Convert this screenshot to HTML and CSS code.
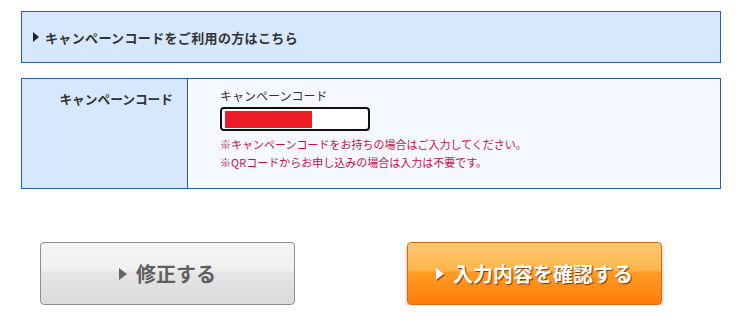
FILE: index.html
```html
<!DOCTYPE html>
<html lang="ja">
<head>
<meta charset="utf-8">
<link rel="stylesheet" href="styles.css">
</head>
<body>
<div class="page">
  <div class="campaign-head">
    <span class="tri"></span><span class="head-text">キャンペーンコードをご利用の方はこちら</span>
  </div>
  <div class="form-table">
    <div class="label-cell">キャンペーンコード</div>
    <div class="field-cell">
      <div class="field-label">キャンペーンコード</div>
      <div class="input-box"><span class="redact"></span></div>
      <p class="note">※キャンペーンコードをお持ちの場合はご入力してください。</p>
      <p class="note">※QRコードからお申し込みの場合は入力は不要です。</p>
    </div>
  </div>
  <div class="buttons">
    <button class="btn btn-back"><span class="btri"></span>修正する</button>
    <button class="btn btn-confirm"><span class="btri"></span>入力内容を確認する</button>
  </div>
</div>
</body>
</html>
```
FILE: styles.css
```css
* { box-sizing: border-box; }
body {
  margin: 0;
  background: #fff;
  font-family: "Noto Sans CJK JP", "Noto Sans", sans-serif;
  color: #222;
}
.page {
  padding: 11px 0 0 21px;
  width: 721px;
}
.campaign-head {
  height: 52px;
  border: 1px solid #2a5aa8;
  background: #d6e8fd;
  display: flex;
  align-items: center;
  padding-left: 11px;
  font-size: 13px;
  font-weight: bold;
  color: #333;
  letter-spacing: 0.35px;
}
.tri {
  width: 0; height: 0;
  border-top: 5px solid transparent;
  border-bottom: 5px solid transparent;
  border-left: 6px solid #222;
  margin-right: 6px;
}
.form-table {
  margin-top: 15px;
  height: 111px;
  border: 1px solid #2a5aa8;
  display: flex;
}
.label-cell {
  width: 166px;
  background: #d6e8fd;
  border-right: 1px solid #2a5aa8;
  text-align: right;
  padding: 10px 14px 0 0;
  font-size: 12.7px;
  font-weight: bold;
  color: #333;
}
.field-cell {
  flex: 1;
  background: #f5f9ff;
  padding: 9px 0 0 32px;
}
.field-label {
  font-size: 12px;
  color: #333;
  line-height: 16px;
}
.input-box {
  margin-top: 3px;
  width: 150px;
  height: 24px;
  border: 2px solid #111;
  border-radius: 4px;
  background: #fff;
  padding: 2px 0 0 3px;
}
.redact {
  display: block;
  width: 87px;
  height: 17px;
  background: #ee1c25;
}
.note {
  margin: 0;
  font-size: 11px;
  line-height: 18px;
  color: #c8104a;
}
.note:first-of-type { margin-top: 4px; }
.buttons {
  margin-top: 53px;
  display: flex;
  gap: 112px;
  padding-left: 19px;
}
.btn {
  width: 255px;
  height: 63px;
  border-radius: 4px;
  font-family: inherit;
  font-size: 20px;
  font-weight: bold;
  display: flex;
  align-items: center;
  justify-content: center;
  padding: 0;
}
.btn-back {
  border: 1px solid #8e8e8e;
  color: #5f5f5f;
  background: linear-gradient(#f4f4f4 0%, #efefef 45%, #e6e6e6 48%, #dadada 100%);
}
.btn-confirm {
  border: 1px solid #e0660a;
  color: #fff;
  text-shadow: 1px 1px 1px #7a3600;
  background: linear-gradient(#ffc873 0%, #ffb54b 45%, #ff9d24 48%, #ff7c0c 100%);
  box-shadow: 0 3px 4px rgba(0,0,0,0.3);
}
.btri {
  width: 0; height: 0;
  border-top: 6px solid transparent;
  border-bottom: 6px solid transparent;
  border-left: 8px solid currentColor;
  margin-right: 9px;
}
.btn-back .btri { border-left-color: #666; }
.btn-confirm .btri { filter: drop-shadow(1px 1px 0 #7a3600); }
```
